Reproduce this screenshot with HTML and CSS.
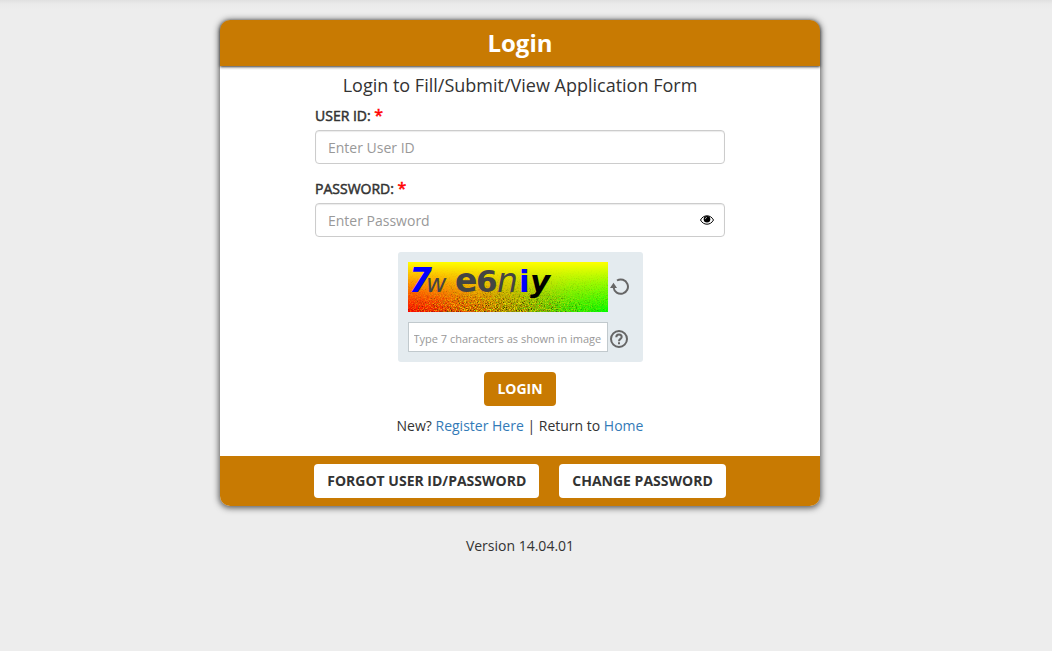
FILE: index.html
```html
<!DOCTYPE html>
<html lang="en">
<head>
    <meta charset="UTF-8">
    <meta name="viewport" content="width=device-width, initial-scale=1">
    <title>Login</title>
    <link rel="stylesheet" href="styles.css">
</head>
<body>
<main class="page">
    <form class="card" action="#" method="post">
        <h1 class="card-header">Login</h1>

        <div class="card-body">
            <h2 class="subtitle">Login to Fill/Submit/View Application Form</h2>

            <div class="form-group">
                <label for="userId">USER ID: <span class="required">*</span></label>
                <input class="form-control" type="text" id="userId" name="userId" placeholder="Enter User ID">
            </div>

            <div class="form-group">
                <label for="password">PASSWORD: <span class="required">*</span></label>
                <div class="password-box">
                    <input class="form-control" type="password" id="password" name="password" placeholder="Enter Password">
                    <button class="toggle" type="button" aria-label="Show password">
                        <svg width="14" height="10" viewBox="0 0 14 10">
                            <path d="M.5 5C2 2.200 4.300.8 7 .8S12 2.200 13.500 5C12 7.800 9.700 9.200 7 9.200S2 7.800.5 5z" fill="#fff" stroke="#000"/>
                            <circle cx="7" cy="4.300" r="3.300"/>
                            <path d="M5.200 4.200A2 2 0 0 1 7 2.400" fill="none" stroke="#fff" stroke-width=".6"/>
                        </svg>
                    </button>
                </div>
            </div>

            <div class="captcha">
                <svg class="captcha-image" width="200" height="50" viewBox="0 0 200 50">
                    <defs>
                        <linearGradient id="hue">
                            <stop offset="0" stop-color="#f00"/>
                            <stop offset=".15" stop-color="#f52000"/>
                            <stop offset=".35" stop-color="#d86000"/>
                            <stop offset=".6" stop-color="#80a800"/>
                            <stop offset=".8" stop-color="#30e800"/>
                            <stop offset="1" stop-color="#0f0"/>
                        </linearGradient>
                        <linearGradient id="top" x2="0" y2="1">
                            <stop offset="0" stop-color="#ff0"/>
                            <stop offset=".1" stop-color="#ff0" stop-opacity=".9"/>
                            <stop offset="1" stop-color="#ff0" stop-opacity="0"/>
                        </linearGradient>
                        <linearGradient id="fade" x2="0" y2="1">
                            <stop offset=".1" stop-color="#000"/>
                            <stop offset=".5" stop-color="#aaa"/>
                            <stop offset="1" stop-color="#fff"/>
                        </linearGradient>
                        <radialGradient id="middle" cx=".45" cy="1" r=".52">
                            <stop offset=".3" stop-color="#fff"/>
                            <stop offset="1" stop-color="#444"/>
                        </radialGradient>
                        <mask id="low"><rect width="200" height="50" fill="url(#fade)"/></mask>
                        <mask id="center"><rect width="200" height="50" fill="url(#middle)"/></mask>
                        <filter id="dark" x="0" y="0" width="1" height="1" color-interpolation-filters="sRGB">
                            <feTurbulence type="fractalNoise" baseFrequency=".85" numOctaves="2" seed="4"/>
                            <feColorMatrix values="0 0 5 0 -2.300  0 5 0 0 -2.300  0 0 0 0 0  4 0 0 0 -1.800"/>
                        </filter>
                        <filter id="light" x="0" y="0" width="1" height="1" color-interpolation-filters="sRGB">
                            <feTurbulence type="fractalNoise" baseFrequency=".8" numOctaves="2" seed="9"/>
                            <feColorMatrix values="0 0 0 0 1  0 0 0 0 .9  0 0 0 0 0  0 6 0 0 -3.100"/>
                        </filter>
                    </defs>
                    <rect width="200" height="50" fill="url(#hue)"/>
                    <rect width="200" height="50" fill="url(#top)"/>
                    <g mask="url(#center)">
                        <g mask="url(#low)">
                            <rect width="200" height="50" filter="url(#dark)" opacity=".7"/>
                            <rect width="200" height="50" filter="url(#light)" opacity=".8"/>
                        </g>
                    </g>
                    <g class="captcha-text">
                        <text class="blue bold slant" x="1" y="30" font-size="33">7</text>
                        <text class="slant" x="18" y="30" font-size="25">w</text>
                        <text class="bold" x="47" y="30" font-size="33">e</text>
                        <text class="bold" x="68" y="30" font-size="31">6</text>
                        <text class="slant" x="89" y="30" font-size="33">n</text>
                        <text class="blue bold" x="111" y="30" font-size="31">i</text>
                        <text class="black bold slant" x="122" y="30" font-size="31">y</text>
                    </g>
                </svg>
                <button class="captcha-button" type="button" aria-label="Reload image">
                    <svg width="20" height="18" viewBox="0 0 20 18">
                        <path d="M7 2.500A7.200 7.200 0 1 1 3.600 9.500" fill="none" stroke="#666" stroke-width="2"/>
                        <path d="M0 10 3.500 4.800 7 10z" fill="#666"/>
                    </svg>
                </button>
                <input class="captcha-input" type="text" name="captcha" aria-label="Captcha" placeholder="Type 7 characters as shown in image">
                <button class="captcha-button help" type="button" aria-label="Help">
                    <svg width="18" height="18" viewBox="0 0 18 18" fill="none" stroke="#666" stroke-width="2">
                        <circle cx="9" cy="9" r="8"/>
                        <path d="M6.300 7.200C6.300 5.500 7.500 4.500 9 4.500s2.700 1 2.700 2.500C11.700 8.800 9 9 9 11.200M9 12.300v2"/>
                    </svg>
                </button>
            </div>

            <button class="btn btn-login" type="submit">LOGIN</button>

            <p class="links">New? <a href="#">Register Here</a> | Return to <a href="#">Home</a></p>
        </div>

        <div class="card-footer">
            <button class="btn" type="button">FORGOT USER ID/PASSWORD</button>
            <button class="btn" type="button">CHANGE PASSWORD</button>
        </div>
    </form>

    <p class="version">Version 14.04.01</p>
</main>
</body>
</html>
```
FILE: styles.css
```css
* {
    box-sizing: border-box;
}

body {
    margin: 0;
    min-height: 100vh;
    background: linear-gradient(#e0e0e0, #eaeaea 4px, #ededed 10px) #ededed;
    color: #333;
    font-family: "Open Sans", sans-serif;
    font-size: 14px;
    line-height: 20px;
}

.page {
    padding: 20px 12px 20px 0;
}

.card {
    max-width: 600px;
    margin: 0 auto;
    background: #fff;
    border-radius: 10px;
    box-shadow: 0 1px 6px 1px #555;
}

.card-header {
    margin: 0;
    padding: 7px 0;
    background: #c87a02;
    border-radius: 10px 10px 0 0;
    box-shadow: 0 1px 3px #333;
    color: #fff;
    font-size: 24px;
    line-height: 32px;
    text-align: center;
}

.card-body {
    display: flex;
    flex-direction: column;
    align-items: center;
    max-width: 410px;
    margin: 0 auto;
    padding: 9px 0 10px;
}

.subtitle {
    margin: 0 0 11px;
    font-size: 18px;
    font-weight: 400;
    line-height: 20px;
}

.form-group {
    width: 100%;
    margin-bottom: 15px;
}

label {
    display: block;
    margin-bottom: 4px;
    -webkit-text-stroke: 0.5px #333;
}

.required {
    color: #f00;
    font-size: 16px;
    line-height: 16px;
    -webkit-text-stroke: 0.5px #f00;
}

.form-control {
    display: block;
    width: 100%;
    height: 34px;
    padding: 6px 12px;
    border: 1px solid #ccc;
    border-radius: 4px;
    box-shadow: inset 0 1px 1px rgba(0, 0, 0, 0.08);
    color: #555;
    font: inherit;
}

input::placeholder {
    color: #999;
}

.password-box {
    position: relative;
}

.toggle {
    position: absolute;
    top: 12px;
    right: 11px;
}

.toggle,
.captcha-button {
    padding: 0;
    border: 0;
    background: none;
    line-height: 0;
    cursor: pointer;
}

.captcha {
    display: grid;
    grid-template-columns: 200px 20px;
    align-items: center;
    justify-items: start;
    gap: 10px 2px;
    padding: 10px 13px 10px 10px;
    margin-bottom: 10px;
    background: #e4ebef;
    border-radius: 3px;
}

.captcha-text {
    font-family: "DejaVu Sans", sans-serif;
    fill: #444;
}

.bold {
    font-weight: bold;
}

.slant {
    font-style: oblique;
}

.blue {
    fill: #00f;
}

.black {
    fill: #000;
}

.captcha-input {
    width: 100%;
    height: 30px;
    padding: 2px 5px 0;
    border: 1px solid #c1c9cd;
    font: 11px "Open Sans", sans-serif;
}

.help {
    padding-top: 4px;
}

.btn {
    height: 34px;
    padding: 6px 13px;
    border: 0;
    border-radius: 4px;
    background: #fff;
    color: #333;
    font: bold 14px/20px "Open Sans", sans-serif;
    cursor: pointer;
}

.btn-login {
    background: #c87a02;
    color: #fff;
}

.links {
    margin: 10px 0;
}

a {
    color: #337ab7;
    text-decoration: none;
}

.card-footer {
    display: flex;
    flex-wrap: wrap;
    justify-content: center;
    gap: 8px 20px;
    padding: 8px;
    background: #c87a02;
    border-radius: 0 0 10px 10px;
}

.version {
    margin: 30px 0 0;
    text-align: center;
}
```
